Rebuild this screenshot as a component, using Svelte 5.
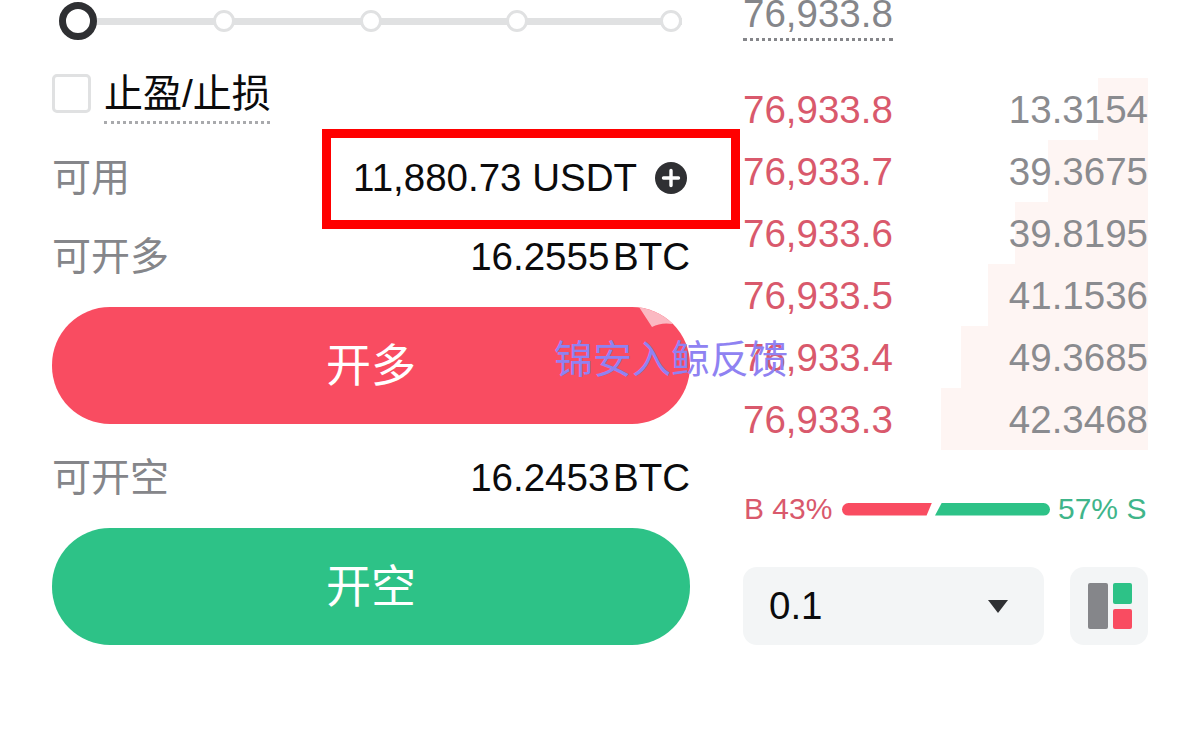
<script lang="ts">
  const stops = [116, 125, 124, 132];
  const asks = [
    { price: '76,933.8', size: '13.3154', depth: 50 },
    { price: '76,933.7', size: '39.3675', depth: 100 },
    { price: '76,933.6', size: '39.8195', depth: 133 },
    { price: '76,933.5', size: '41.1536', depth: 160 },
    { price: '76,933.4', size: '49.3685', depth: 187 },
    { price: '76,933.3', size: '42.3468', depth: 207 },
  ];
</script>

<div class="page">
  <section class="trade">
    <div class="slider">
      <span class="thumb"></span>
      {#each stops as gap}
        <span class="stop" style="margin-left: {gap}px"></span>
      {/each}
    </div>

    <div class="tpsl">
      <span class="check"></span>
      <span class="tpsl-label">止盈/止损</span>
    </div>

    <div class="info avail">
      <span class="label">可用</span>
      <span class="avail-val">11,880.73 USDT
        <svg class="plus" viewBox="0 0 32 32" width="32" height="32">
          <circle cx="16" cy="16" r="16" fill="#2f3033" />
          <path d="M16 8.5v15M8.5 16h15" stroke="#fff" stroke-width="3.4" stroke-linecap="round" />
        </svg>
      </span>
    </div>

    <div class="info long">
      <span class="label">可开多</span>
      <span class="val">16.2555 BTC</span>
    </div>
    <button class="action buy">
      <span class="action-text">开多</span>
      <svg class="fold" viewBox="0 0 60 30" width="60" height="30">
        <path d="M0 0 L13 20 Q22 15 34 17 L60 30 L60 0 Z" fill="#fbb9c2" />
      </svg>
    </button>

    <div class="info short">
      <span class="label">可开空</span>
      <span class="val">16.2453 BTC</span>
    </div>
    <button class="action sell"><span class="action-text">开空</span></button>
  </section>

  <section class="book">
    <div class="last"><span>76,933.8</span></div>

    <div class="rows">
      {#each asks as a}
        <div class="row">
          <span class="depth" style="width: {a.depth}px"></span>
          <span class="price">{a.price}</span>
          <span class="size">{a.size}</span>
        </div>
      {/each}
    </div>

    <div class="ratio">
      <span class="b">B 43%</span>
      <span class="bar bar-b"></span>
      <span class="bar bar-s"></span>
      <span class="s">57% S</span>
    </div>

    <div class="controls">
      <div class="select">
        <span>0.1</span>
        <span class="caret"></span>
      </div>
      <div class="layout-btn">
        <span class="lay-grey"></span>
        <span class="lay-right">
          <span class="lay-green"></span>
          <span class="lay-red"></span>
        </span>
      </div>
    </div>
  </section>

  <div class="highlight"></div>
  <div class="watermark">锦安入鲸反馈</div>
</div>

<style>
  :global(body) {
    margin: 0;
    background: #fff;
  }

  .page {
    position: relative;
    width: 1200px;
    height: 738px;
    overflow: hidden;
    display: flex;
    font-family: 'Liberation Sans', 'Noto Sans CJK SC', sans-serif;
    color: #0b0b0c;
  }

  .trade {
    width: 638px;
    margin-left: 52px;
    flex: none;
  }

  .slider {
    height: 42px;
    margin: 0 8px 0 7px;
    display: flex;
    align-items: center;
    background: linear-gradient(#e0e1e2, #e0e1e2) center / 100% 7px no-repeat;
  }

  .thumb {
    flex: none;
    width: 38px;
    height: 38px;
    box-sizing: border-box;
    border: 7px solid #2f3033;
    border-radius: 50%;
    background: #fff;
  }

  .stop {
    flex: none;
    width: 22px;
    height: 22px;
    box-sizing: border-box;
    border: 3px solid #e0e1e2;
    border-radius: 50%;
    background: #fff;
  }

  .tpsl {
    display: flex;
    align-items: flex-start;
    gap: 14px;
    margin-top: 32px;
    height: 49px;
  }

  .check {
    width: 39px;
    height: 39px;
    box-sizing: border-box;
    border: 3px solid #e0e1e2;
    border-radius: 5px;
  }

  .tpsl-label {
    font-size: 39px;
    line-height: 39px;
    height: 47px;
    border-bottom: 3px dotted #a9aaad;
    width: 166px;
    margin-left: -1px;
    white-space: nowrap;
  }

  .info {
    display: flex;
    justify-content: space-between;
    align-items: center;
    height: 44px;
  }

  .avail {
    margin-top: 33px;
  }

  .long {
    margin-top: 35px;
  }

  .short {
    margin-top: 32px;
  }

  .label {
    font-size: 39px;
    line-height: 39px;
    margin-top: -2px;
    color: #85868a;
  }

  .val {
    font-size: 38.5px;
    word-spacing: -7px;
    color: #0b0b0c;
  }

  .avail-val {
    display: flex;
    align-items: center;
    gap: 18px;
    font-size: 38.5px;
    margin-right: 3px;
  }

  .action {
    display: block;
    position: relative;
    width: 100%;
    height: 117px;
    border: none;
    border-radius: 58px;
    color: #fff;
    font: inherit;
    font-size: 45px;
    overflow: hidden;
    padding: 0;
  }

  .action-text {
    position: relative;
    top: -3px;
  }

  .buy {
    margin-top: 28px;
    background: #f94c61;
  }

  .sell {
    margin-top: 28px;
    background: #2dc287;
  }

  .fold {
    position: absolute;
    top: 0;
    left: 587px;
  }

  .book {
    width: 405px;
    margin-left: 53px;
    flex: none;
  }

  .last {
    margin-top: -8px;
    height: 49px;
    line-height: 44px;
    font-size: 38.5px;
    color: #85868a;
  }

  .last span {
    display: inline-block;
    height: 49px;
    border-bottom: 3px dotted #85868a;
    box-sizing: border-box;
  }

  .rows {
    margin-top: 37px;
  }

  .row {
    position: relative;
    display: flex;
    justify-content: space-between;
    align-items: center;
    box-sizing: border-box;
    height: 62px;
    padding-top: 2px;
    font-size: 38.5px;
  }

  .depth {
    position: absolute;
    top: 0;
    bottom: 0;
    right: 0;
    background: #fef5f3;
  }

  .price,
  .size {
    position: relative;
  }

  .price {
    color: #d9596c;
  }

  .size {
    color: #8a8b8f;
  }

  .ratio {
    display: flex;
    align-items: center;
    margin-top: 43px;
    height: 32px;
    font-size: 30px;
    white-space: nowrap;
  }

  .b {
    color: #d9596c;
    width: 92px;
    margin-left: 1px;
    flex: none;
  }

  .s {
    color: #3fb58a;
    margin-left: 8px;
  }

  .bar {
    flex: none;
    height: 13px;
  }

  .bar-b {
    width: 90px;
    margin-left: 6px;
    background: #f94c61;
    border-radius: 7px 0 0 7px;
    clip-path: polygon(0 0, 100% 0, 94% 100%, 0 100%);
  }

  .bar-s {
    width: 115px;
    margin-left: 3px;
    background: #2dc287;
    border-radius: 0 7px 7px 0;
    clip-path: polygon(6% 0, 100% 0, 100% 100%, 0 100%);
  }

  .controls {
    display: flex;
    gap: 26px;
    margin-top: 42px;
  }

  .select {
    width: 301px;
    height: 78px;
    box-sizing: border-box;
    padding: 0 36px 0 26px;
    border-radius: 14px;
    background: #f3f5f6;
    display: flex;
    align-items: center;
    justify-content: space-between;
    font-size: 38.5px;
  }

  .caret {
    width: 0;
    height: 0;
    border-left: 10px solid transparent;
    border-right: 10px solid transparent;
    border-top: 13px solid #2f3033;
  }

  .layout-btn {
    width: 78px;
    height: 78px;
    box-sizing: border-box;
    padding: 16px 16px 16px 18px;
    border-radius: 14px;
    background: #f3f5f6;
    display: flex;
    gap: 5px;
  }

  .lay-grey {
    width: 20px;
    border-radius: 2px;
    background: #85868a;
  }

  .lay-right {
    flex: 1;
    display: flex;
    flex-direction: column;
    gap: 5px;
  }

  .lay-green,
  .lay-red {
    flex: 1;
    border-radius: 2px;
  }

  .lay-green {
    background: #2dc287;
  }

  .lay-red {
    background: #f94c61;
  }

  .highlight {
    position: absolute;
    left: 322px;
    top: 129px;
    width: 418px;
    height: 100px;
    box-sizing: border-box;
    border: 9px solid #ff0000;
  }

  .watermark {
    position: absolute;
    left: 554px;
    top: 336px;
    font-size: 39px;
    line-height: 48px;
    white-space: nowrap;
    color: #8f82f2;
  }
</style>
